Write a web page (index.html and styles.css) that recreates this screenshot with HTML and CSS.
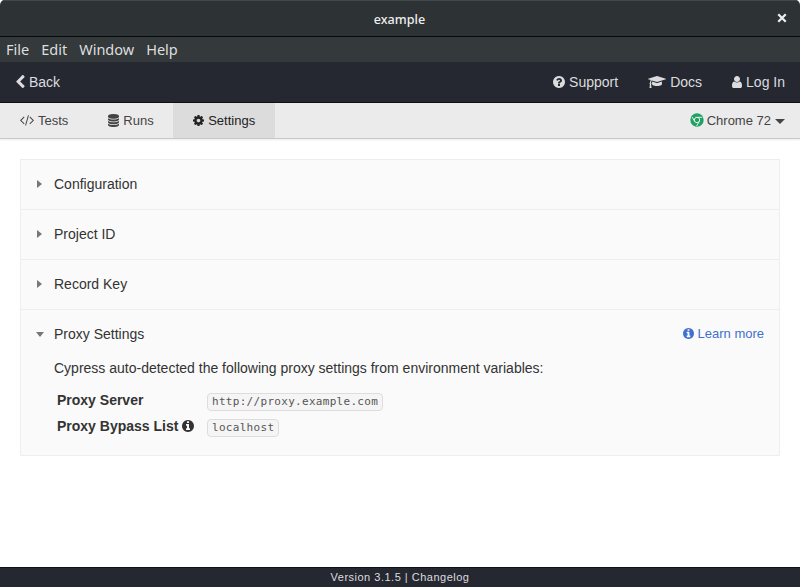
FILE: index.html
```
<!DOCTYPE html>
<html lang="en">
<head>
<meta charset="utf-8">
<title>example</title>
<link rel="stylesheet" href="styles.css">
</head>
<body>
<svg class="defs" width="0" height="0">
  <symbol id="info" viewBox="128 128 1536 1536"><path d="M1152 1376v-160q0-14-9-23t-23-9h-96v-512q0-14-9-23t-23-9h-320q-14 0-23 9t-9 23v160q0 14 9 23t23 9h96v320h-96q-14 0-23 9t-9 23v160q0 14 9 23t23 9h448q14 0 23-9t9-23zm-128-896v-160q0-14-9-23t-23-9h-192q-14 0-23 9t-9 23v160q0 14 9 23t23 9h192q14 0 23-9t9-23zm640 416q0 209-103 385.500t-279.500 279.500-385.500 103-385.500-103-279.500-279.500-103-385.500 103-385.500 279.500-279.500 385.500-103 385.500 103 279.500 279.500 103 385.500z"/></symbol>
</svg>
<div class="window">
  <header class="titlebar">
    <span class="title">example</span>
    <svg class="close" viewBox="0 0 8 8"><path d="M1 1l6 6M7 1l-6 6"/></svg>
  </header>
  <div class="menubar"><span>File</span><span>Edit</span><span>Window</span><span>Help</span></div>
  <nav class="topnav">
    <a class="item"><svg class="ic-back" viewBox="410 30 1050 1600"><path d="M1427 301l-531 531 531 531q19 19 19 45t-19 45l-166 166q-19 19-45 19t-45-19l-742-742q-19-19-19-45t19-45l742-742q19-19 45-19t45 19l166 166q19 19 19 45t-19 45z"/></svg><span>Back</span></a>
    <div class="right">
      <a class="item"><svg class="ic-help" viewBox="128 128 1536 1536"><path d="M1024 1376v-192q0-14-9-23t-23-9h-192q-14 0-23 9t-9 23v192q0 14 9 23t23 9h192q14 0 23-9t9-23zm256-672q0-88-55.500-163t-138.500-116-170-41q-243 0-371 213-15 24 8 42l132 100q7 6 19 6 16 0 25-12 53-68 86-92 34-24 86-24 48 0 85.500 26t37.500 59q0 38-20 61t-68 45q-63 28-115.500 86.500t-52.500 125.500v36q0 14 9 23t23 9h192q14 0 23-9t9-23q0-19 21.500-49.500t54.500-49.500q32-18 49-28.500t46-35 44.500-48 28-60.500 12.500-81zm384 192q0 209-103 385.500t-279.500 279.500-385.500 103-385.500-103-279.500-279.500-103-385.500 103-385.500 279.500-279.500 385.500-103 385.500 103 279.500 279.500 103 385.500z"/></svg><span>Support</span></a>
      <a class="item"><svg class="ic-docs" viewBox="0 128 2304 1536"><path d="M1774 836l18 316q4 69-82 128t-235 93.500-323 34.500-323-34.500-235-93.500-82-128l18-316 574 181q22 7 48 7t48-7zm530-324q0 23-22 31l-1120 352q-4 1-10 1t-10-1l-652-206q-43 34-71 111.500t-34 178.500q63 36 63 109 0 69-58 107l58 433q2 14-8 25-9 11-24 11h-192q-15 0-24-11-10-11-8-25l58-433q-58-38-58-107 0-73 65-111 11-207 98-330l-333-104q-22-8-22-31t22-31l1120-352q4-1 10-1t10 1l1120 352q22 8 22 31z"/></svg><span>Docs</span></a>
      <a class="item"><svg class="ic-user" viewBox="256 128 1280 1536"><path d="M1536 1399q0 109-62.500 187t-150.500 78h-854q-88 0-150.500-78t-62.500-187q0-85 8.500-160.500t31.500-152 58.500-131 94-89 134.500-34.500q131 128 313 128t313-128q76 0 134.500 34.500t94 89 58.500 131 31.500 152 8.500 160.500zm-256-887q0 159-112.500 271.500t-271.500 112.500-271.500-112.500-112.500-271.500 112.500-271.500 271.500-112.500 271.500 112.500 112.500 271.500z"/></svg><span>Log In</span></a>
    </div>
  </nav>
  <div class="tabs">
    <a class="tab"><svg class="ic-code" viewBox="40 256 1840 1440"><path d="M617 1399l-50 50q-10 10-23 10t-23-10l-466-466q-10-10-10-23t10-23l466-466q10-10 23-10t23 10l50 50q10 10 10 23t-10 23l-393 393 393 393q10 10 10 23t-10 23zm591-1067l-373 1291q-4 13-15.500 19.500t-23.500 2.500l-62-17q-13-4-19.500-15.500t-2.500-24.500l373-1291q4-13 15.500-19.500t23.500-2.500l62 17q13 4 19.500 15.500t2.500 24.500zm657 651l-466 466q-10 10-23 10t-23-10l-50-50q-10-10-10-23t10-23l393-393-393-393q-10-10-10-23t10-23l50-50q10-10 23-10t23 10l466 466q10 10 10 23t-10 23z"/></svg><span>Tests</span></a>
    <a class="tab runs"><svg class="ic-db" viewBox="128 0 1536 1792"><path d="M896 768q237 0 443-43t325-127v170q0 69-103 128t-280 93.500-385 34.500-385-34.500-280-93.500-103-128v-170q119 84 325 127t443 43zm0 768q237 0 443-43t325-127v170q0 69-103 128t-280 93.500-385 34.500-385-34.500-280-93.500-103-128v-170q119 84 325 127t443 43zm0-384q237 0 443-43t325-127v170q0 69-103 128t-280 93.500-385 34.500-385-34.500-280-93.500-103-128v-170q119 84 325 127t443 43zm0-1152q208 0 385 34.500t280 93.500 103 128v128q0 69-103 128t-280 93.500-385 34.500-385-34.500-280-93.500-103-128v-128q0-69 103-128t280-93.500 385-34.500z"/></svg><span>Runs</span></a>
    <a class="tab active"><svg class="ic-cog" viewBox="128 128 1536 1536"><path d="M1152 896q0-106-75-181t-181-75-181 75-75 181 75 181 181 75 181-75 75-181zm512-109v222q0 12-8 23t-20 13l-185 28q-19 54-39 91 35 50 107 138 10 12 10 25t-9 23q-27 37-99 108t-94 71q-12 0-26-9l-138-108q-44 23-91 38-16 136-29 186-7 28-36 28h-222q-14 0-24.500-8.500t-11.500-21.500l-28-184q-49-16-90-37l-141 107q-10 9-25 9-14 0-25-11-126-114-165-168-7-10-7-23 0-12 8-23 15-21 51-66.500t54-70.500q-27-50-41-99l-183-27q-13-2-21-12.500t-8-23.500v-222q0-12 8-23t19-13l186-28q14-46 39-92-40-57-107-138-10-12-10-24 0-10 9-23 26-36 98.500-107.500t94.500-71.500q13 0 26 10l138 107q44-23 91-38 16-136 29-186 7-28 36-28h222q14 0 24.500 8.500t11.500 21.500l28 184q49 16 90 37l142-107q9-9 24-9 13 0 25 10 129 119 165 170 7 8 7 22 0 12-8 23-15 21-51 66.500t-54 70.500q26 50 41 98l183 28q13 2 21 12.500t8 23.500z"/></svg><span>Settings</span></a>
    <div class="browser">
      <svg class="ic-chrome" viewBox="0 0 14 14"><circle class="disc" cx="7" cy="7" r="6.700"/><circle class="ring" cx="7" cy="7" r="2.700"/><path class="ring" d="M7 4.300h5.200M4.660 8.350L2.200 4.100M9.340 8.350L6.600 13"/></svg>
      <span>Chrome 72</span><i class="caret"></i>
    </div>
  </div>
  <main class="content">
    <div class="panels">
      <section class="panel"><div class="head"><i class="arrow"></i><span>Configuration</span></div></section>
      <section class="panel"><div class="head"><i class="arrow"></i><span>Project ID</span></div></section>
      <section class="panel"><div class="head"><i class="arrow"></i><span>Record Key</span></div></section>
      <section class="panel open">
        <div class="head"><i class="arrow down"></i><span>Proxy Settings</span><a class="learn"><svg viewBox="0 0 12 12"><use href="#info"/></svg><span>Learn more</span></a></div>
        <div class="body">
          <p>Cypress auto-detected the following proxy settings from environment variables:</p>
          <div class="row"><b>Proxy Server</b><code>http://proxy.example.com</code></div>
          <div class="row"><b>Proxy Bypass List <svg viewBox="0 0 12 12"><use href="#info"/></svg></b><code>localhost</code></div>
        </div>
      </section>
    </div>
  </main>
  <footer class="footer">Version 3.1.5 | Changelog</footer>
</div>
</body>
</html>
```
FILE: styles.css
```
* { box-sizing: border-box; }
body { margin: 0; background: #fff; color: #333; font: 14px/20px "Liberation Sans", Arial, sans-serif; }
svg { display: block; fill: currentColor; flex: none; }
.defs { position: absolute; }
.window { height: 587px; display: flex; flex-direction: column; border-radius: 5px 5px 0 0; overflow: hidden; }
.titlebar { height: 37px; flex: none; display: grid; grid-template-columns: 1fr auto 1fr; align-items: center; background: #2d3234; border-top: 1px solid #43494b; border-bottom: 1px solid #0a0c0c; color: #eee; padding: 1px 13px 0 12px; }
.title { grid-column: 2; padding-top: 2px; font: 500 12.6px/20px "Noto Sans", sans-serif; }
.close { width: 10px; height: 10px; justify-self: end; margin-top: -2px; stroke: #eee; stroke-width: 1.8; }
.menubar { height: 25px; flex: none; display: flex; gap: 12px; padding-left: 6px; background: #34393b; color: #dedede; font: 14.5px/25px "Noto Sans", sans-serif; }
.topnav { height: 41px; flex: none; display: flex; justify-content: space-between; padding: 0 15px 0 16px; background: #252831; border-bottom: 1px solid #0f1116; color: #dcdcdf; }
.right { display: flex; gap: 30px; }
.item { display: flex; align-items: center; gap: 4px; }
.ic-back { width: 9px; height: 13px; margin-top: -1px; }
.ic-help { width: 12px; height: 12px; }
.ic-docs { width: 18px; height: 12px; }
.ic-user { width: 10px; height: 12px; }
.tabs { height: 36px; flex: none; display: flex; background: #ebebeb; border-bottom: 1px solid #c8c8c8; box-shadow: 0 1px 2px rgba(0,0,0,.08); font-size: 13px; color: #444; }
.tab { display: flex; align-items: center; gap: 4px; padding: 0 20px; }
.runs { padding: 0 19.5px 0 20px; }
.active { background: #dcdcdc; color: #222; padding: 0 20px; }
.ic-code { width: 14px; height: 11px; }
.ic-db { width: 11px; height: 13px; }
.ic-cog { width: 11px; height: 11px; }
.browser { margin-left: auto; margin-right: 15px; display: flex; align-items: center; gap: 3px; }
.ic-chrome { width: 14px; height: 14px; margin-top: -1px; }
.disc { fill: #1da362; }
.ring { fill: none; stroke: #ebebeb; stroke-width: 1; }
.caret { border: 5px solid transparent; border-top-color: #444; border-bottom: 0; margin: 1px 0 0 1px; }
.content { flex: 1; padding: 20px; }
.panels { background: #fafafa; border: 1px solid #eee; }
.panel + .panel { border-top: 1px solid #eee; }
.head { height: 49px; display: flex; align-items: center; padding: 0 15px 2px 14px; }
.arrow { width: 19px; height: 8px; flex: none; }
.arrow::before { content: ""; display: block; width: 0; margin-left: 2px; border: 4px solid transparent; border-left: 5px solid #777; border-right: 0; }
.arrow.down::before { margin: 2px 0 0 1px; border: 4px solid transparent; border-top: 5px solid #777; border-bottom: 0; }
.learn { margin-left: auto; display: flex; align-items: center; gap: 4px; color: #4270d0; font-size: 13px; }
.learn svg { width: 11px; height: 11px; }
.body { padding: 0 33px 16px; margin-top: -1px; }
.body p { margin: 0 0 9px; }
.row { height: 26px; display: flex; align-items: center; padding-left: 3px; }
.row b { width: 150px; height: 23px; display: flex; align-items: center; gap: 4px; white-space: nowrap; }
.row b svg { width: 12px; height: 12px; }
.row code { margin-top: 3px; height: 18px; padding: 0 4px; border: 1px solid #ddd; border-radius: 4px; background: #f5f5f5; color: #555; font: 11px/15px "DejaVu Sans Mono", monospace; letter-spacing: .3px; }
.footer { height: 20px; flex: none; background: #252831; border-top: 1px solid #0f1116; color: #ddd; text-align: center; font-size: 11px; line-height: 19px; letter-spacing: .5px; }
```
